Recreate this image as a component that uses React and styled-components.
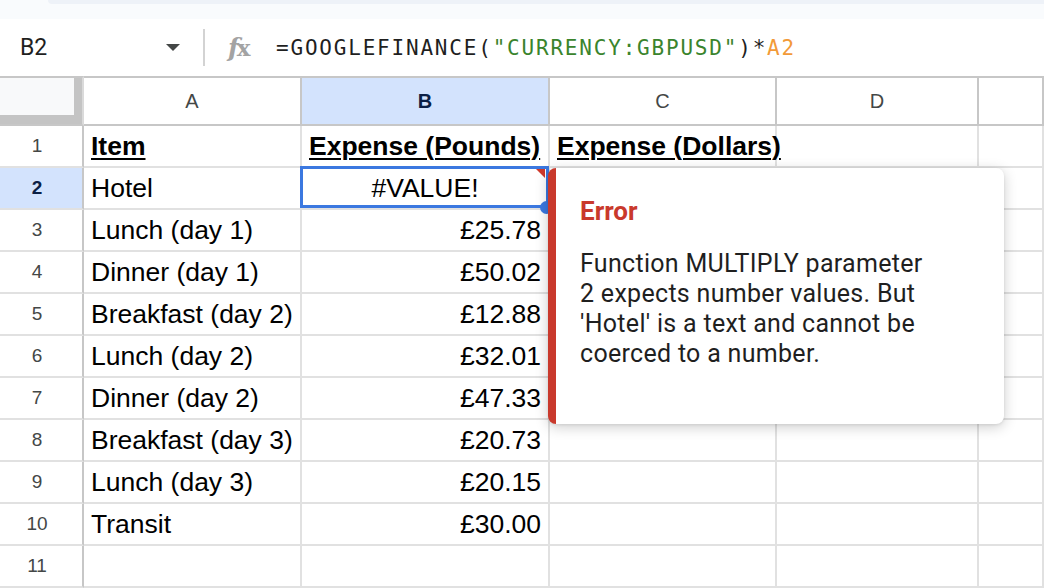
import React from 'react';
import styled, { createGlobalStyle } from 'styled-components';

const GlobalStyle = createGlobalStyle`
  html, body {
    margin: 0;
    padding: 0;
    background: #fff;
    overflow: hidden;
  }
  body {
    font-family: 'Liberation Sans', Arial, sans-serif;
  }
`;

const columns = ['A', 'B', 'C', 'D', ''];

const rows = [
  ['Item', 'Expense (Pounds)', 'Expense (Dollars)'],
  ['Hotel', '#VALUE!'],
  ['Lunch (day 1)', '£25.78'],
  ['Dinner (day 1)', '£50.02'],
  ['Breakfast (day 2)', '£12.88'],
  ['Lunch (day 2)', '£32.01'],
  ['Dinner (day 2)', '£47.33'],
  ['Breakfast (day 3)', '£20.73'],
  ['Lunch (day 3)', '£20.15'],
  ['Transit', '£30.00'],
  [],
];

const App = () => {
  return (
    <>
      <GlobalStyle />
      <Page>
        <TopStrip>
          <ToolbarEdge />
        </TopStrip>
        <FormulaBar>
          <NameBox>
            <span>B2</span>
            <Caret />
          </NameBox>
          <Divider />
          <FxIcon>
            f<FxX>x</FxX>
          </FxIcon>
          <Formula>
            =GOOGLEFINANCE(<Str>"CURRENCY:GBPUSD"</Str>)*<Ref>A2</Ref>
          </Formula>
        </FormulaBar>
        <Sheet>
          <Corner>
            <CornerInner />
          </Corner>
          {columns.map((c, i) => (
            <ColHead key={i} active={c === 'B'}>
              {c}
            </ColHead>
          ))}
          {rows.map((r, ri) => (
            <React.Fragment key={ri}>
              <RowHead active={ri === 1}>{ri + 1}</RowHead>
              <Cell bold={ri === 0}>{r[0] && <span>{r[0]}</span>}</Cell>
              {ri === 1 ? (
                <SelectedCell align='center'>
                  {r[1]}
                  <ErrorMark />
                  <FillHandle />
                </SelectedCell>
              ) : (
                <Cell bold={ri === 0} align={ri === 0 ? 'left' : 'right'}>
                  {r[1] && <span>{r[1]}</span>}
                </Cell>
              )}
              <Cell bold={ri === 0}>{r[2] && <span>{r[2]}</span>}</Cell>
              <Cell />
              <Cell />
            </React.Fragment>
          ))}
          <ErrorPopup>
            <ErrorTitle>Error</ErrorTitle>
            <ErrorText>
              Function MULTIPLY parameter 2 expects number values. But 'Hotel'
              is a text and cannot be coerced to a number.
            </ErrorText>
          </ErrorPopup>
        </Sheet>
      </Page>
    </>
  );
};

const Page = styled.div`
  display: flex;
  flex-direction: column;
  width: 1044px;
  height: 588px;
  overflow: hidden;
`;

const TopStrip = styled.div`
  height: 19px;
  background: #f9fbfd;
  display: flex;
  align-items: flex-start;
`;

const ToolbarEdge = styled.div`
  flex: 1;
  height: 4px;
  margin-left: 48px;
  background: #eef2f8;
  border-bottom-left-radius: 14px;
`;

const FormulaBar = styled.div`
  height: 57px;
  display: flex;
  align-items: center;
  background: #fff;
`;

const NameBox = styled.div`
  width: 190px;
  box-sizing: border-box;
  padding: 0 10px 0 20px;
  display: flex;
  align-items: center;
  justify-content: space-between;
  font-family: Roboto, 'Liberation Sans', sans-serif;
  font-size: 23px;
  color: #1f1f1f;
`;

const Caret = styled.span`
  width: 0;
  height: 0;
  border-left: 7px solid transparent;
  border-right: 7px solid transparent;
  border-top: 7px solid #444746;
`;

const Divider = styled.div`
  width: 2px;
  height: 37px;
  margin-left: 13px;
  background: #d3d3d3;
`;

const FxIcon = styled.span`
  margin-left: 23px;
  width: 28px;
  font-family: 'DejaVu Serif', 'Liberation Serif', serif;
  font-style: italic;
  font-weight: 700;
  font-size: 25px;
  color: #a3a3a3;
  letter-spacing: -2px;
`;

const FxX = styled.span`
  font-style: normal;
  font-size: 23px;
`;

const Formula = styled.div`
  margin-left: 20px;
  font-family: 'DejaVu Sans Mono', monospace;
  font-size: 21px;
  letter-spacing: 1.8px;
  color: #1f1f1f;
  white-space: nowrap;
`;

const Str = styled.span`
  color: #3a842d;
`;

const Ref = styled.span`
  color: #f29a38;
`;

const Sheet = styled.div`
  position: relative;
  display: grid;
  grid-template-columns: 84px 218px 248px 227px 202px 1fr;
  grid-template-rows: 50px repeat(11, 42px);
  font-size: 26.5px;
  color: #000;
`;

const Corner = styled.div`
  box-sizing: border-box;
  border-top: 2px solid #c7c7c7;
  border-right: 2px solid #dadada;
  border-bottom: 2px solid #c7c7c7;
  background: #c4c4c4;
  display: flex;
`;

const CornerInner = styled.div`
  width: 74px;
  height: 37px;
  background: #f8f9fa;
`;

const ColHead = styled.div`
  box-sizing: border-box;
  border-top: 2px solid #c7c7c7;
  border-right: 2px solid #c7c7c7;
  border-bottom: 2px solid #c7c7c7;
  display: flex;
  align-items: center;
  justify-content: center;
  font-size: 20px;
  background: ${(p) => (p.active ? '#d3e3fd' : '#fff')};
  color: ${(p) => (p.active ? '#0b1f45' : '#444746')};
  font-weight: ${(p) => (p.active ? 700 : 400)};
`;

const RowHead = styled.div`
  box-sizing: border-box;
  border-right: 2px solid #c7c7c7;
  border-bottom: 2px solid #e1e1e1;
  display: flex;
  align-items: center;
  justify-content: center;
  padding-right: 8px;
  font-size: 19px;
  background: ${(p) => (p.active ? '#d3e3fd' : '#fff')};
  color: ${(p) => (p.active ? '#0b1f45' : '#444746')};
  font-weight: ${(p) => (p.active ? 700 : 400)};
`;

const Cell = styled.div`
  box-sizing: border-box;
  border-right: 2px solid #e1e1e1;
  border-bottom: 2px solid #e1e1e1;
  padding: 0 7px;
  display: flex;
  align-items: center;
  white-space: nowrap;
  overflow: visible;
  justify-content: ${(p) =>
    p.align === 'right' ? 'flex-end' : p.align === 'center' ? 'center' : 'flex-start'};
  font-weight: ${(p) => (p.bold ? 700 : 400)};
  text-decoration: ${(p) => (p.bold ? 'underline' : 'none')};
  text-decoration-thickness: 2px;
  text-underline-offset: 3px;
`;

const SelectedCell = styled(Cell)`
  position: relative;
  &::after {
    content: '';
    position: absolute;
    top: -2px;
    left: -2px;
    right: -1px;
    bottom: 0;
    border: 3px solid #3b78e0;
  }
`;

const ErrorMark = styled.span`
  position: absolute;
  top: 1px;
  right: 3px;
  width: 0;
  height: 0;
  border-top: 9px solid #d0392b;
  border-left: 9px solid transparent;
  z-index: 2;
`;

const FillHandle = styled.span`
  position: absolute;
  right: -5px;
  bottom: -6px;
  width: 13px;
  height: 13px;
  border-radius: 50%;
  background: #3b78e0;
  z-index: 2;
`;

const ErrorPopup = styled.div`
  position: absolute;
  left: 548px;
  top: 92px;
  width: 456px;
  height: 256px;
  box-sizing: border-box;
  padding: 28px 64px 0 24px;
  background: #fff;
  border-left: 8px solid #c9392c;
  border-radius: 8px;
  box-shadow: 0 3px 14px rgba(0, 0, 0, 0.2), 0 1px 3px rgba(0, 0, 0, 0.08);
  z-index: 5;
  font-family: Roboto, 'Liberation Sans', sans-serif;
`;

const ErrorTitle = styled.div`
  font-size: 26px;
  line-height: 30px;
  font-weight: 700;
  color: #c9392c;
`;

const ErrorText = styled.div`
  margin-top: 23px;
  font-size: 25px;
  line-height: 30px;
  letter-spacing: 0.3px;
  color: #1f1f1f;
`;

export default App;
